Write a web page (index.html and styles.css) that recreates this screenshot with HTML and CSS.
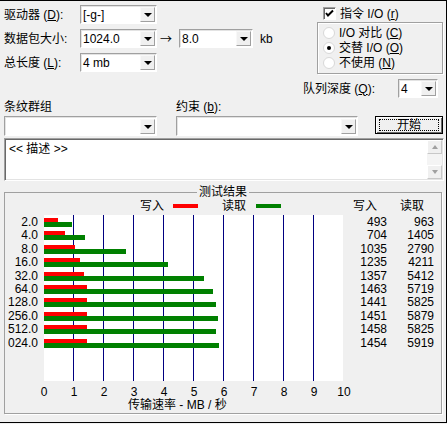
FILE: index.html
```html
<!DOCTYPE html>
<html lang="zh-CN">
<head>
<meta charset="utf-8">
<title>磁盘基准测试</title>
<link rel="stylesheet" href="styles.css">
</head>
<body>
<div class="win">
  <div class="top">
    <div class="left">
      <div class="row">
        <span class="lbl">驱动器 (<u>D</u>):</span>
        <div class="sel w-main"><span class="val">[-g-]</span><span class="dd"><i></i></span></div>
      </div>
      <div class="row">
        <span class="lbl">数据包大小:</span>
        <div class="sel w-main"><span class="val">1024.0</span><span class="dd"><i></i></span></div>
        <span class="arrow">→</span>
        <div class="sel w-to"><span class="val">8.0</span><span class="dd"><i></i></span></div>
        <span class="kb">kb</span>
      </div>
      <div class="row">
        <span class="lbl">总长度 (<u>L</u>):</span>
        <div class="sel w-main"><span class="val">4 mb</span><span class="dd"><i></i></span></div>
      </div>
    </div>
    <div class="right">
      <div class="check">
        <span class="cb"><svg width="11" height="11" viewBox="0 0 11 11"><polyline points="2,5 4,7.5 9,2.5" fill="none" stroke="#000" stroke-width="2"/></svg></span>
        <span>指令 I/O (<u>r</u>)</span>
      </div>
      <div class="radios">
        <div class="radio"><span class="rc"></span><span>I/O 对比 (<u>C</u>)</span></div>
        <div class="radio"><span class="rc on"></span><span>交替 I/O (<u>O</u>)</span></div>
        <div class="radio"><span class="rc"></span><span>不使用 (<u>N</u>)</span></div>
      </div>
      <div class="queue">
        <span class="qlbl">队列深度 (<u>Q</u>):</span>
        <div class="sel w-q"><span class="val">4</span><span class="dd"><i></i></span></div>
      </div>
    </div>
  </div>

  <div class="mid">
    <div class="col1">
      <div class="mlbl">条纹群组</div>
      <div class="sel w-c1 tall"><span class="val"></span><span class="dd"><i></i></span></div>
    </div>
    <div class="col2">
      <div class="mlbl">约束 (<u>b</u>):</div>
      <div class="sel w-c2 tall"><span class="val"></span><span class="dd"><i></i></span></div>
    </div>
    <div class="btn"><span class="focus">开始</span></div>
  </div>

  <div class="desc">
    <div class="desc-text">&lt;&lt; 描述 &gt;&gt;</div>
    <div class="sb">
      <div class="sbb"><i class="up"></i></div>
      <div class="sbt"></div>
      <div class="sbb"><i class="down"></i></div>
    </div>
  </div>

  <fieldset class="results">
    <legend>测试结果</legend>
    <div class="legend-row">
      <span class="lg-w">写入</span><span class="sw red"></span>
      <span class="lg-r">读取</span><span class="sw green"></span>
      <span class="hd-w">写入</span><span class="hd-r">读取</span>
    </div>
    <div class="chart">
      <div class="ylabels">
        <div>2.0</div><div>4.0</div><div>8.0</div><div>16.0</div><div>32.0</div>
        <div>64.0</div><div>128.0</div><div>256.0</div><div>512.0</div><div>024.0</div>
      </div>
      <div class="plot">
        <div class="bars"><div class="b wr" style="width:14px"></div><div class="b rd" style="width:28px"></div></div>
        <div class="bars"><div class="b wr" style="width:21px"></div><div class="b rd" style="width:41px"></div></div>
        <div class="bars"><div class="b wr" style="width:31px"></div><div class="b rd" style="width:82px"></div></div>
        <div class="bars"><div class="b wr" style="width:36px"></div><div class="b rd" style="width:124px"></div></div>
        <div class="bars"><div class="b wr" style="width:40px"></div><div class="b rd" style="width:160px"></div></div>
        <div class="bars"><div class="b wr" style="width:43px"></div><div class="b rd" style="width:169px"></div></div>
        <div class="bars"><div class="b wr" style="width:43px"></div><div class="b rd" style="width:172px"></div></div>
        <div class="bars"><div class="b wr" style="width:43px"></div><div class="b rd" style="width:174px"></div></div>
        <div class="bars"><div class="b wr" style="width:43px"></div><div class="b rd" style="width:172px"></div></div>
        <div class="bars"><div class="b wr" style="width:43px"></div><div class="b rd" style="width:175px"></div></div>
      </div>
      <div class="numcol ncw">
        <div>493</div><div>704</div><div>1035</div><div>1235</div><div>1357</div>
        <div>1463</div><div>1441</div><div>1451</div><div>1458</div><div>1454</div>
      </div>
      <div class="numcol ncr">
        <div>963</div><div>1405</div><div>2790</div><div>4211</div><div>5412</div>
        <div>5719</div><div>5825</div><div>5879</div><div>5825</div><div>5919</div>
      </div>
    </div>
    <div class="xlabels">
      <span>0</span><span>1</span><span>2</span><span>3</span><span>4</span><span>5</span>
      <span>6</span><span>7</span><span>8</span><span>9</span><span>10</span>
    </div>
    <div class="xtitle">传输速率 - MB / 秒</div>
  </fieldset>
</div>
</body>
</html>
```
FILE: styles.css
```css
* { box-sizing: border-box; }
html, body { margin: 0; padding: 0; }
body {
  width: 447px;
  height: 424px;
  overflow: hidden;
  background: #f0f0f0;
  font-family: "Liberation Sans", "Noto Sans CJK SC", sans-serif;
  font-size: 12px;
  line-height: 14px;
  color: #000;
}
u { text-decoration: underline; text-underline-offset: 1px; }

.win {
  width: 447px;
  height: 423px;
  border-top: 1px solid #000;
  border-right: 1px solid #000;
  border-bottom: 1px solid #000;
  background: #f0f0f0;
}

/* ---------- top area ---------- */
.top { display: flex; height: 97px; }
.left { width: 303px; padding: 4px 0 0 4px; }
.row { display: flex; align-items: center; height: 19px; margin-bottom: 5px; }
.lbl { width: 76px; white-space: nowrap; }
.arrow { width: 22px; padding-left: 3px; font-family: "Noto Sans CJK SC", sans-serif; line-height: 14px; }
.kb { margin-left: 7px; }

.sel {
  display: flex;
  align-items: center;
  height: 19px;
  background: #fff;
  border: 1px solid;
  border-color: #a0a0a0 #fff #fff #a0a0a0;
  box-shadow: inset 1px 1px 0 #e3e3e3;
  padding: 0 1px 0 2px;
}
.sel.tall { height: 20px; }
.val { flex: 1; white-space: nowrap; }
.dd {
  width: 15px;
  height: 15px;
  background: #f0f0f0;
  border: 1px solid;
  border-color: #f8f8f8 #a0a0a0 #a0a0a0 #f8f8f8;
  display: flex;
  align-items: center;
  justify-content: center;
}
.dd i {
  width: 0; height: 0;
  border-left: 4px solid transparent;
  border-right: 4px solid transparent;
  border-top: 4px solid #000;
  margin-top: 1px;
}
.w-main { width: 77px; }
.w-to { width: 74px; }
.w-q { width: 40px; }
.w-c1 { width: 153px; }
.w-c2 { width: 182px; }

.right { width: 140px; }
.check { display: flex; align-items: center; height: 13px; margin-top: 6px; padding-left: 20px; }
.cb {
  width: 13px; height: 13px;
  background: #fff;
  border: 1px solid;
  border-color: #a0a0a0 #fff #fff #a0a0a0;
  box-shadow: inset 1px 1px 0 #696969;
  margin-right: 4px;
  display: flex; align-items: center; justify-content: center;
}
.radios {
  margin: 2px 0 0 14px;
  width: 126px;
  height: 52px;
  border: 1px solid #a0a0a0;
  box-shadow: inset 1px 1px 0 #fff, 1px 1px 0 #fff;
  padding: 2px 0 0 5px;
}
.radio { display: flex; align-items: center; height: 15px; }
.rc {
  width: 12px; height: 12px;
  border-radius: 50%;
  background: #fff;
  border: 1px solid #d8d8d8;
  margin-right: 4px;
  display: flex; align-items: center; justify-content: center;
}
.rc.on::after { content: ""; width: 4px; height: 4px; border-radius: 50%; background: #000; }
.queue { display: flex; align-items: center; height: 19px; margin-top: 5px; }
.qlbl { width: 95px; white-space: nowrap; }

/* ---------- middle ---------- */
.mid { display: flex; padding: 2px 0 0 4px; }
.mlbl { height: 14px; margin-bottom: 2px; white-space: nowrap; }
.col1 { width: 153px; }
.col2 { width: 182px; margin-left: 19px; }
.btn {
  margin: 16px 0 0 17px;
  width: 68px;
  height: 18px;
  border: 1px solid #000;
  background: #f0f0f0;
  box-shadow: inset 1px 1px 0 #fff, inset -1px -1px 0 #696969;
  padding: 2px 3px;
  display: flex;
}
.focus {
  flex: 1;
  border: 1px dotted #000;
  text-align: center;
  line-height: 10px;
}

/* ---------- description ---------- */
.desc {
  display: flex;
  margin: 2px 0 0 4px;
  width: 440px;
  height: 43px;
  background: #fff;
  border: 1px solid;
  border-color: #a0a0a0 #fff #fff #a0a0a0;
  box-shadow: inset 1px 1px 0 #696969, inset -1px -1px 0 #e3e3e3;
  padding: 1px;
}
.desc-text { flex: 1; padding: 2px 0 0 3px; }
.sb { width: 15px; display: flex; flex-direction: column; background: #f4f4f4; }
.sbt { flex: 1; }
.sbb {
  height: 14px;
  background: #f0f0f0;
  border: 1px solid;
  border-color: #fff #c8c8c8 #c8c8c8 #fff;
  display: flex; align-items: center; justify-content: center;
}
.sbb i { width: 0; height: 0; border-left: 3px solid transparent; border-right: 3px solid transparent; }
.sbb i.up { border-bottom: 4px solid #a0a0a0; }
.sbb i.down { border-top: 4px solid #a0a0a0; }

/* ---------- results ---------- */
.results {
  margin: 4px 0 0 4px;
  width: 438px;
  height: 229px;
  border: 1px solid #a0a0a0;
  box-shadow: 1px 1px 0 #fff;
  padding: 0;
  min-inline-size: 0;
}
.results legend {
  margin: 0 auto;
  padding: 0 2px;
  line-height: 14px;
}
.legend-row { display: flex; align-items: center; height: 14px; }
.lg-w { margin-left: 135px; }
.sw { height: 4px; width: 25px; }
.sw.red { background: #ff0000; margin-left: 9px; }
.sw.green { background: #008000; margin-left: 10px; }
.lg-r { margin-left: 24px; }
.hd-w { margin-left: 72px; }
.hd-r { margin-left: 23px; }

.chart { display: flex; margin-top: 2px; height: 166px; }
.ylabels { width: 33px; padding-top: 1px; text-align: right; overflow: hidden; }
.ylabels div, .numcol div { height: 13.4px; line-height: 13.4px; white-space: nowrap; }
.plot {
  margin-left: 6px;
  width: 299px;
  height: 166px;
  padding-top: 3px;
  background: #fff linear-gradient(to right, transparent 29px, #000080 29px, #000080 30px) 0 0 / 30px 100% repeat-x;
}
.bars { height: 13.4px; }
.b { height: 4px; }
.b.wr { background: #ff0000; }
.b.rd { background: #008000; height: 5px; }
.numcol { padding-top: 1px; text-align: right; }
.ncw { width: 44px; }
.ncr { width: 47px; }

.xlabels { display: flex; margin: 5px 0 0 24px; line-height: 12px; }
.xlabels span { width: 30px; text-align: center; }
.xtitle { padding-left: 123px; margin-top: 1px; line-height: 12px; white-space: nowrap; }
```
